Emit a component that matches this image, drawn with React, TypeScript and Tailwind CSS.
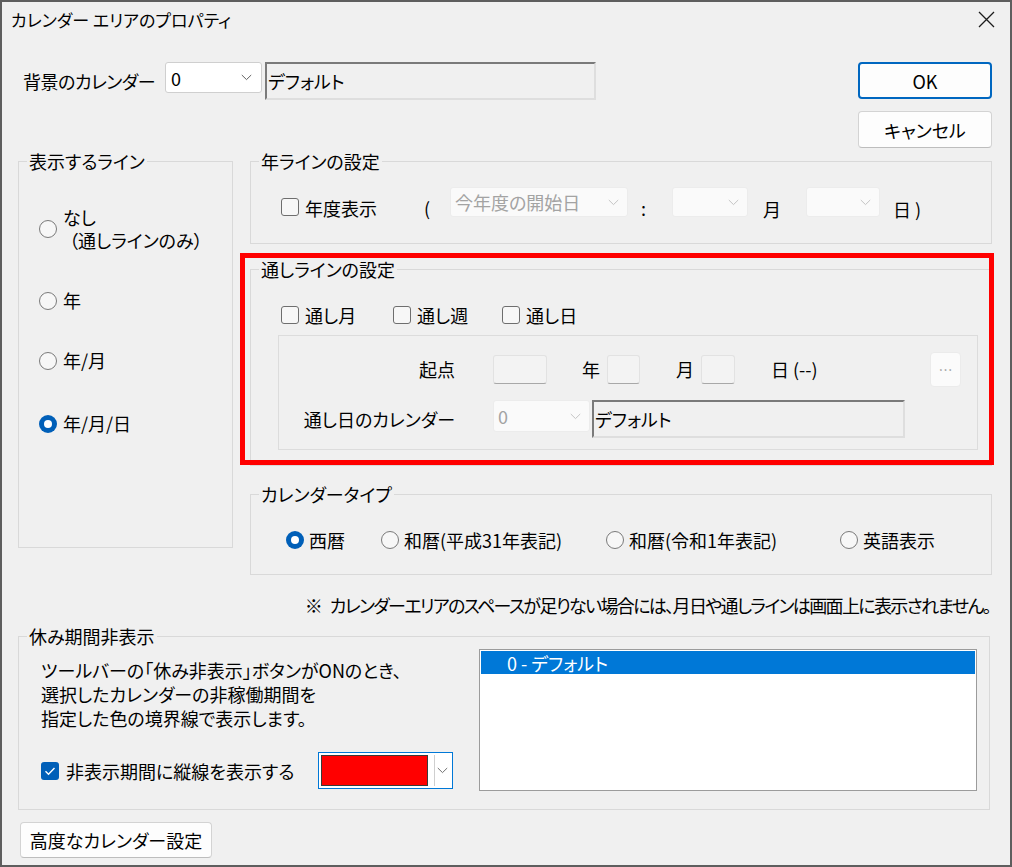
import React from "react"

const Chevron = ({ color = "#606060" }: { color?: string }) => (
  <svg width="11" height="7" viewBox="0 0 11 7">
    <path d="M0.8 1l4.7 4.6L10.2 1" fill="none" stroke={color} strokeWidth="1" />
  </svg>
)

const Radio = ({ checked }: { checked?: boolean }) =>
  checked ? (
    <span className="flex h-[18px] w-[18px] shrink-0 items-center justify-center rounded-full bg-[#005fb8]">
      <span className="h-[8px] w-[8px] rounded-full bg-white" />
    </span>
  ) : (
    <span className="h-[18px] w-[18px] shrink-0 rounded-full border-[1.5px] border-[#7a7a7a] bg-[#f7f7f7]" />
  )

const Checkbox = ({ checked }: { checked?: boolean }) =>
  checked ? (
    <span className="flex h-[18px] w-[18px] shrink-0 items-center justify-center rounded-[3px] bg-[#005fb8]">
      <svg width="12" height="10" viewBox="0 0 12 10">
        <path d="M1.5 5.2l3 3L10.5 2" fill="none" stroke="#fff" strokeWidth="1.4" />
      </svg>
    </span>
  ) : (
    <span className="block h-[18px] w-[18px] shrink-0 rounded-[3px] border border-[#6e6e6e] bg-[#f7f7f7]" />
  )

const Group = ({
  title,
  className,
  children
}: {
  title: string
  className?: string
  children?: React.ReactNode
}) => (
  <fieldset className={`min-w-0 border border-[#d9d9d9] ${className ?? ""}`}>
    <legend className="ml-[8px] px-[2px] leading-[20px]">{title}</legend>
    {children}
  </fieldset>
)

const DisabledCombo = ({ text, className }: { text?: string; className: string }) => (
  <div
    className={`flex shrink-0 items-center justify-between rounded-[3px] border border-[#ececec] bg-[#fafafa] pl-[4px] pr-[8px] text-[#a3a3a3] ${className}`}
  >
    <span>{text}</span>
    <Chevron color="#c4c4c4" />
  </div>
)

const Sunken = ({ text, className }: { text: string; className: string }) => (
  <div
    className={`flex shrink-0 items-center border-2 border-t-[#7a7a7a] border-l-[#7a7a7a] border-r-[#dedede] border-b-[#dedede] pl-[1px] ${className}`}
  >
    {text}
  </div>
)

const EditBox = ({ className }: { className: string }) => (
  <div
    className={`shrink-0 rounded-[3px] border border-[#e2e2e2] border-b-[#a8a8a8] bg-[#f3f3f3] ${className}`}
  />
)

export default function App() {
  return (
    <div className="flex h-[867px] w-[1012px] flex-col overflow-hidden border-2 border-[#5e5e5e] bg-[#f0f0f0] font-['Noto_Sans_CJK_JP',sans-serif] text-[18px] leading-[20px] text-black [font-feature-settings:'palt']">
      {/* title bar */}
      <div className="flex h-[35px] shrink-0 items-center justify-between pl-[9px] pr-[15px]">
        <span className="text-[17px]">カレンダー エリアのプロパティ</span>
        <svg width="17" height="17" viewBox="0 0 17 17">
          <path d="M1 1l15 15M16 1L1 16" stroke="#1c1c1c" strokeWidth="1.3" />
        </svg>
      </div>

      {/* background calendar + buttons */}
      <div className="mt-[25px] flex shrink-0 items-start pl-[21px] pr-[18px]">
        <div className="flex items-start">
          <span className="flex h-[38px] w-[142px] items-center tracking-[-0.5px]">背景のカレンダー</span>
          <div className="flex h-[31px] w-[97px] items-center justify-between rounded-[3px] border border-[#cfcfcf] bg-white pl-[5px] pr-[9px]">
            <span>0</span>
            <Chevron />
          </div>
          <Sunken text="デフォルト" className="ml-[3px] h-[38px] w-[331px]" />
        </div>
        <div className="ml-auto flex flex-col gap-[12px]">
          <button className="h-[37px] w-[134px] rounded-[4px] border-2 border-[#0067c0] bg-[#fdfdfd]">
            OK
          </button>
          <button className="h-[37px] w-[134px] rounded-[4px] border border-[#d3d3d3] border-b-[#bdbdbd] bg-[#fdfdfd]">
            キャンセル
          </button>
        </div>
      </div>

      {/* main area */}
      <div className="mt-[3px] flex shrink-0 items-start pl-[16px]">
        <Group title="表示するライン" className="h-[397px] w-[215px]">
          <div className="flex flex-col pl-[20px]">
            <div className="mt-[35px] flex items-center gap-[6px]">
              <Radio />
              <div className="leading-[23px]">
                <div>なし</div>
                <div className="pl-[6px]">（通しラインのみ）</div>
              </div>
            </div>
            <div className="mt-[37px] flex items-center gap-[6px] leading-[23px]">
              <Radio />
              <span>年</span>
            </div>
            <div className="mt-[37px] flex items-center gap-[6px] leading-[23px]">
              <Radio />
              <span>年/月</span>
            </div>
            <div className="mt-[40px] flex items-center gap-[6px] leading-[23px]">
              <Radio checked />
              <span>年/月/日</span>
            </div>
          </div>
        </Group>

        <div className="ml-[17px] flex w-[742px] flex-col">
          {/* year line */}
          <Group title="年ラインの設定" className="h-[93px]">
            <div className="mt-[16px] flex items-start pl-[30px]">
              <span className="mt-[11px] flex shrink-0">
                <Checkbox />
              </span>
              <span className="ml-[6px] flex h-[42px] w-[119px] shrink-0 items-center">年度表示</span>
              <span className="flex h-[42px] w-[26px] shrink-0 items-center">(</span>
              <DisabledCombo text="今年度の開始日" className="h-[30px] w-[178px]" />
              <span className="flex h-[42px] w-[44px] shrink-0 items-center pl-[13px]">:</span>
              <DisabledCombo className="h-[30px] w-[76px]" />
              <span className="flex h-[44px] w-[58px] shrink-0 items-center pl-[15px]">月</span>
              <DisabledCombo className="h-[30px] w-[74px]" />
              <span className="flex h-[44px] items-center pl-[13px]">日 )</span>
            </div>
          </Group>

          {/* through line (highlighted) */}
          <div className="relative mt-[15px]">
            <Group title="通しラインの設定" className="h-[207px]">
              <div className="mt-[26px] flex h-[20px] items-center pl-[30px]">
                <div className="flex w-[112px] items-center gap-[6px]">
                  <Checkbox />
                  <span>通し月</span>
                </div>
                <div className="flex w-[109px] items-center gap-[6px]">
                  <Checkbox />
                  <span>通し週</span>
                </div>
                <div className="flex items-center gap-[6px]">
                  <Checkbox />
                  <span>通し日</span>
                </div>
              </div>
              <div className="ml-[27px] mt-[10px] h-[115px] w-[700px] border border-[#dcdcdc]">
                <div className="mt-[15px] flex h-[36px] items-center">
                  <span className="w-[176px] shrink-0 text-right">起点</span>
                  <EditBox className="ml-[38px] h-[29px] w-[54px]" />
                  <span className="w-[60px] shrink-0 pl-[35px]">年</span>
                  <EditBox className="h-[29px] w-[33px]" />
                  <span className="w-[61px] shrink-0 pl-[36px]">月</span>
                  <EditBox className="h-[29px] w-[34px]" />
                  <span className="pl-[36px]">日 (--)</span>
                  <div className="ml-auto mr-[16px] flex h-[35px] w-[31px] items-center justify-center rounded-[4px] border border-[#ebebeb] bg-[#fbfbfb] text-[14px] text-[#9a9a9a]">
                    …
                  </div>
                </div>
                <div className="mt-[13px] flex items-start">
                  <span className="flex h-[38px] w-[176px] shrink-0 items-center justify-end">
                    通し日のカレンダー
                  </span>
                  <DisabledCombo text="0" className="ml-[38px] h-[32px] w-[97px]" />
                  <Sunken text="デフォルト" className="ml-[2px] h-[38px] w-[313px]" />
                </div>
              </div>
            </Group>
            <div className="pointer-events-none absolute left-[-10px] top-[-6px] h-[212px] w-[754px] border-[5px] border-[#ff0000]" />
          </div>

          {/* calendar type */}
          <Group title="カレンダータイプ" className="mt-[18px] h-[91px]">
            <div className="mt-[26px] flex h-[20px] items-center pl-[35px]">
              <div className="flex w-[95px] items-center gap-[5px]">
                <Radio checked />
                <span>西暦</span>
              </div>
              <div className="flex w-[225px] items-center gap-[5px]">
                <Radio />
                <span>和暦(平成31年表記)</span>
              </div>
              <div className="flex w-[234px] items-center gap-[5px]">
                <Radio />
                <span>和暦(令和1年表記)</span>
              </div>
              <div className="flex items-center gap-[5px]">
                <Radio />
                <span>英語表示</span>
              </div>
            </div>
          </Group>

          <div className="mt-[18px] flex justify-end whitespace-nowrap pr-[2px] leading-[24px]">
            <span className="mr-[7px]">※</span>
            <span className="tracking-[-1.65px]">
              カレンダーエリアのスペースが足りない場合には、月日や通しラインは画面上に表示されません。
            </span>
          </div>
        </div>
      </div>

      {/* hidden holidays */}
      <Group title="休み期間非表示" className="ml-[16px] mt-[9px] h-[184px] w-[972px] shrink-0">
        <div className="flex items-start">
          <div className="w-[460px] shrink-0 pl-[22px]">
            <div className="mt-[12px] leading-[24px]">
              <div>ツールバーの「休み非表示」ボタンがONのとき、</div>
              <div>選択したカレンダーの非稼働期間を</div>
              <div>指定した色の境界線で表示します。</div>
            </div>
            <div className="mt-[22px] flex h-[37px] items-center">
              <Checkbox checked />
              <span className="ml-[7px] w-[252px] shrink-0">非表示期間に縦線を表示する</span>
              <div className="flex h-[37px] w-[135px] shrink-0 border border-[#0078d7] bg-white p-[2px]">
                <div className="w-[107px] border border-[#3a3a3a] bg-[#ff0000]" />
                <div className="ml-[6px] flex flex-1 items-center justify-center border-l border-[#cfcfcf]">
                  <Chevron color="#707070" />
                </div>
              </div>
            </div>
          </div>
          <div className="mt-[3px] h-[142px] w-[498px] shrink-0 border border-[#9c9c9c] bg-white p-[1px]">
            <div className="flex h-[23px] items-center bg-[#0078d7] pl-[26px] text-white">
              0 - デフォルト
            </div>
          </div>
        </div>
      </Group>

      <button className="ml-[18px] mt-[12px] h-[36px] w-[192px] shrink-0 rounded-[4px] border border-[#d3d3d3] border-b-[#bdbdbd] bg-[#fdfdfd]">
        高度なカレンダー設定
      </button>
    </div>
  )
}
